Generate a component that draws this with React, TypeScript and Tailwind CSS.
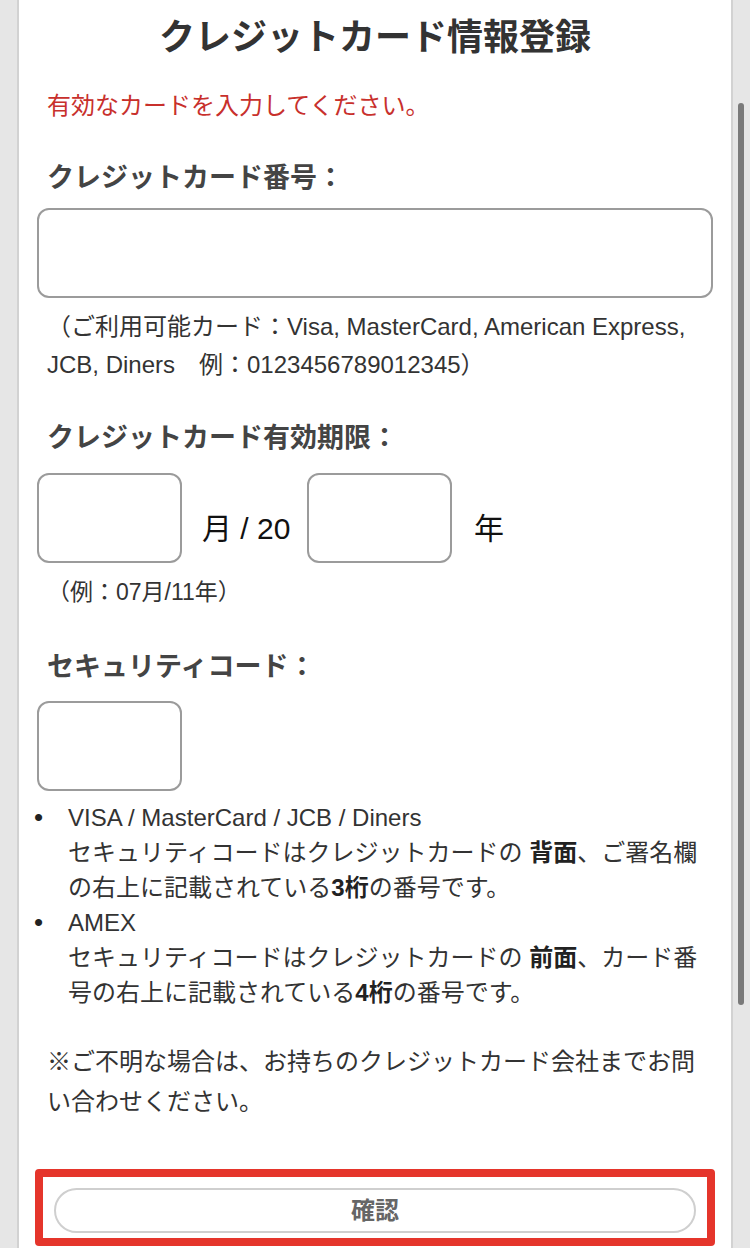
import React from "react";

// credit card registration form
const App: React.FC = () => {
  const [cardNo, setCardNo] = React.useState<string>("");
  const [month, setMonth] = React.useState<string>("");
  const [year, setYear] = React.useState<string>("");
  const [cvc, setCvc] = React.useState<string>("");

  const font = "font-['Liberation_Sans','Noto_Sans_CJK_JP',sans-serif]";

  return (
    <div className={`relative min-h-[1248px] bg-[#e6e6e6] ${font}`}>
      <div className="mx-[17px] min-h-[1248px] border-x-2 border-[#d2d2d2] bg-white px-[18px]">
        <h1 className="pt-[16px] text-center text-[36px] font-bold leading-[44px] text-[#333]">
          クレジットカード情報登録
        </h1>
        <p className="mt-[30px] pl-[10px] text-[24px] leading-[32px] text-[#c8302c]">
          有効なカードを入力してください。
        </p>

        {/* card number */}
        <label htmlFor="cardno" className="mt-[38px] block pl-[10px] text-[27px] font-bold leading-[36px] text-[#444]">
          クレジットカード番号：
        </label>
        <input
          id="cardno"
          value={cardNo}
          type="text"
          onChange={(e) => setCardNo(e.target.value)}
          className="mt-[12px] block h-[90px] w-full rounded-[12px] border-2 border-[#9b9b9b] px-3 text-[24px] outline-none"
        />
        <p className="mt-[10px] pl-[10px] text-[24px] leading-[38px] text-[#333]">
          （ご利用可能カード：Visa, MasterCard, American Express, JCB, Diners　例：0123456789012345）
        </p>

        {/* expiry */}
        <label className="mt-[36px] block pl-[10px] text-[27px] font-bold leading-[36px] text-[#444]">
          クレジットカード有効期限：
        </label>
        <div className="mt-[17px] flex items-center text-[30px] text-[#111]">
          <input
            value={month}
            type="text"
            onChange={(e) => setMonth(e.target.value)}
            className="block h-[90px] w-[145px] rounded-[12px] border-2 border-[#9b9b9b] px-3 text-[24px] outline-none"
          />
          <span className="ml-[20px] mt-[20px] w-[94px] whitespace-nowrap">月 / 20</span>
          <input
            value={year}
            type="text"
            onChange={(e) => setYear(e.target.value)}
            className="ml-[11px] block h-[90px] w-[145px] rounded-[12px] border-2 border-[#9b9b9b] px-3 text-[24px] outline-none"
          />
          <span className="ml-[22px] mt-[20px]">年</span>
        </div>
        <p className="mt-[14px] pl-[10px] text-[23px] leading-[30px] text-[#333]">（例：07月/11年）</p>

        {/* security code */}
        <label className="mt-[42px] block pl-[10px] text-[27px] font-bold leading-[36px] text-[#444]">
          セキュリティコード：
        </label>
        <input
          value={cvc}
          type="text"
          onChange={(e) => setCvc(e.target.value)}
          className="mt-[16px] block h-[90px] w-[145px] rounded-[12px] border-2 border-[#9b9b9b] px-3 text-[24px] outline-none"
        />
        <ul className="mt-[9px] text-[24px] leading-[35px] text-[#333]">
          <li className="flex">
            <span className="-ml-[3px] w-[34px] shrink-0 text-[26px] text-[#222]">•</span>
            <span>
              VISA / MasterCard / JCB / Diners
              <br />
              セキュリティコードはクレジットカードの <b className="text-[#222]">背面</b>、ご署名欄の右上に記載されている
              <b className="text-[#222]">3桁</b>の番号です。
            </span>
          </li>
          <li className="flex">
            <span className="-ml-[3px] w-[34px] shrink-0 text-[26px] text-[#222]">•</span>
            <span>
              AMEX
              <br />
              セキュリティコードはクレジットカードの <b className="text-[#222]">前面</b>、カード番号の右上に記載されている
              <b className="text-[#222]">4桁</b>の番号です。
            </span>
          </li>
        </ul>
        <p className="mt-[32px] pl-[10px] text-[24px] leading-[40px] text-[#333]">
          ※ご不明な場合は、お持ちのクレジットカード会社までお問い合わせください。
        </p>

        {/* confirm */}
        <div className="-mx-[2px] mt-[47px] rounded-[4px] border-[8px] border-[#e5352b] px-[11px] pb-[5px] pt-[11px]">
          <button
            type="button"
            className="block h-[45px] w-full rounded-full border-2 border-[#cfcfcf] bg-white text-[24px] font-bold text-[#666]"
          >
            確認
          </button>
        </div>
      </div>

      {/* scrollbar thumb */}
      <div className="absolute right-[6px] top-[103px] h-[902px] w-[6px] rounded-full bg-[#7a7a7a]"></div>
    </div>
  );
};

export default App;
